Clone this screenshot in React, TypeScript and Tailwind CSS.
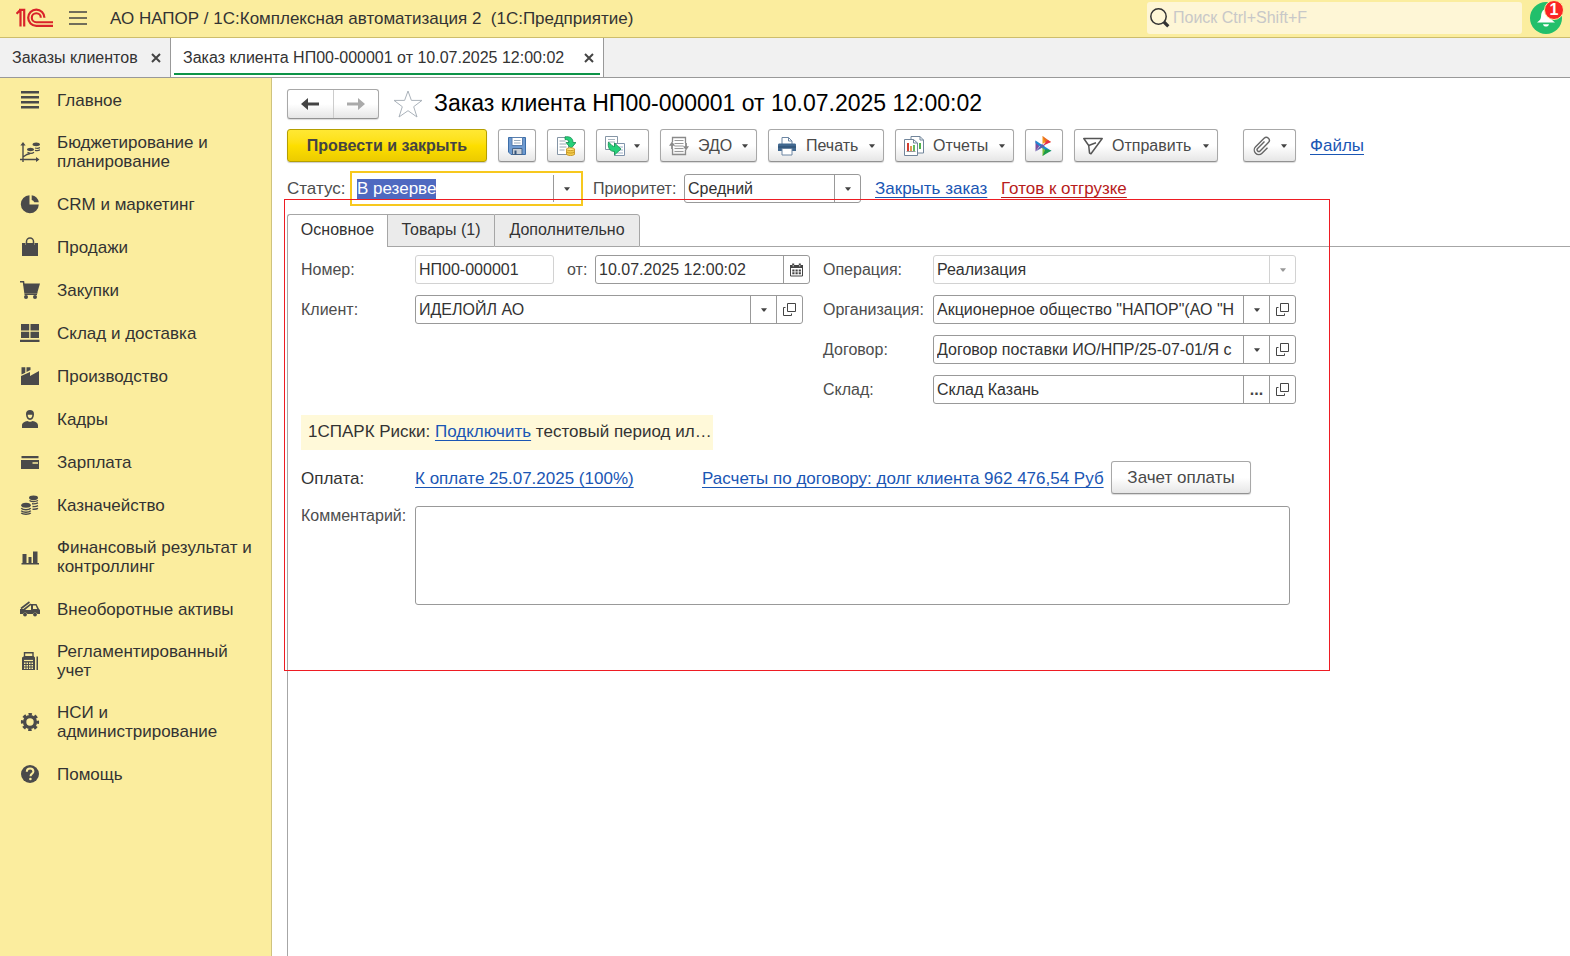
import { useEffect, useRef, type ReactNode } from "react";

type IconProps = { children: ReactNode; box?: string; className?: string };

function Icon({ children, box = "0 0 20 20", className = "size-5" }: IconProps) {
  return (
    <svg viewBox={box} className={`shrink-0 ${className}`} fill="none" aria-hidden="true">
      {children}
    </svg>
  );
}

const INK = "#4a4a4a";

const Caret = ({ className = "text-[#444]" }: { className?: string }) => (
  <svg viewBox="0 0 6 4" className={`h-1 w-1.5 shrink-0 ${className}`} aria-hidden="true">
    <path d="M0 .3h6L3.600 3.500H2.400z" fill="currentColor" />
  </svg>
);

const OpenIcon = () => (
  <Icon box="0 0 13 13" className="size-[13px]">
    <path d="M4.5.5h8v8h-8zM2.5 4.5h-2v8h8v-2" stroke="#444" />
  </Icon>
);

const CalendarIcon = () => (
  <Icon box="0 0 13 14" className="h-3.5 w-[13px]">
    <path d="M.5 3h12v10H.5z" stroke="#444" />
    <path d="M0 2h13v3H0zM2.200.5h2v2h-2zM8.800.5h2v2h-2z" fill="#444" />
    <path d="M3.200 2v1.500M9.800 2v1.500" stroke="#fff" strokeWidth=".8" />
    <path d="M2.300 7.500h8.600M2.300 10.300h8.600" stroke="#444" strokeWidth="2" strokeDasharray="2.200 1" />
  </Icon>
);

const CloseIcon = () => (
  <Icon box="0 0 10 10" className="size-[10px]">
    <path d="M1 1l8 8M9 1L1 9" stroke="#444" strokeWidth="2" />
  </Icon>
);

const sections: { label: string; icon: ReactNode }[] = [
  { label: "Главное", icon: <path d="M1 2.2h18M1 7.2h18M1 12.2h18M1 17.2h18" stroke={INK} strokeWidth="2.4" /> },
  {
    label: "Бюджетирование и планирование",
    icon: (
      <>
        <path d="M3 2v15.5h15M0 17.5h3M3 20v-3M3 15l4-2.5 3-1" stroke={INK} strokeWidth="1.4" />
        <path d="M3 0l2.6 3.6H.4zM19.5 17.5L16 15v5z" fill={INK} />
        <path d="M7 7.5c0-1 1.6-1.700 3.500-1.700s3.500.7 3.500 1.700-1.600 1.700-3.500 1.700S7 8.500 7 7.500zM12.500 2.500C12.500 1.300 14 .5 16.200.5S20 1.300 20 2.500 18.400 4.200 16.200 4.200s-3.700-.7-3.700-1.700z" fill={INK} />
        <path d="M7.500 10.300c2 1.200 5 1.200 6.500 0M15 6c2 .6 4 .3 5-.6M15 8.300c2 .5 4 .2 5-.6" stroke={INK} strokeWidth="1.200" />
      </>
    ),
  },
  {
    label: "CRM и маркетинг",
    icon: (
      <path d="M9.500 1.200v9.200h9.300A9 9 0 1 1 9.500 1.200zM11.700 1.200A8.800 8.800 0 0 1 18.800 8.200h-4.500a3.800 3.800 0 0 0-2.600-2.300z" fill={INK} />
    ),
  },
  {
    label: "Продажи",
    icon: (
      <>
        <path d="M2 6h3.500v2h1.500V6h6v2h1.500V6H18v13H2z" fill={INK} />
        <path d="M6.500 8V4.500a3.500 3.500 0 0 1 7 0V8" stroke={INK} strokeWidth="1.500" />
      </>
    ),
  },
  {
    label: "Закупки",
    icon: (
      <>
        <path d="M0 1.800h3.500l1.500 11h12.500" stroke={INK} strokeWidth="1.500" />
        <path d="M3.500 3.500H20L17.500 12H5zM4.500 13.500H17V15H4.500z" fill={INK} />
        <circle cx="6" cy="17" r="2" fill={INK} />
        <circle cx="15" cy="17" r="2" fill={INK} />
      </>
    ),
  },
  {
    label: "Склад и доставка",
    icon: <path d="M1 1h8.200v6.500H1zM10.500 1H19v6.500h-8.500zM1 8.700h8.200V15H1zM10.500 8.700H19V15h-8.500zM0 16.700h19.500V19H0z" fill={INK} />,
  },
  {
    label: "Производство",
    icon: <path d="M1 19V10l9-4v4l9-5v14zM1.500 1.200h3.800v5.500L1.500 8.500zM6.500 1.200h4V4L6.500 6z" fill={INK} />,
  },
  {
    label: "Кадры",
    icon: (
      <>
        <path d="M6 5c0-2.500 1.500-4 4-4s4 1.500 4 4c0 3-1.500 6-4 6S6 8 6 5z" fill={INK} />
        <path d="M7.700 5.800h4.600c0 2-.8 3.500-2.300 3.500S7.700 7.800 7.700 5.800z" fill="#fbed9e" />
        <path d="M2 19v-2.500C2 14 4.500 12.300 7.500 12c1 1 4 1 5 0 3 .3 5.500 2 5.500 4.500V19z" fill={INK} />
      </>
    ),
  },
  {
    label: "Зарплата",
    icon: (
      <>
        <path d="M1.500 4h17v2.200H1.500zM1 8h18v9H1z" fill={INK} />
        <path d="M12.500 11h5.500" stroke="#fbed9e" strokeWidth="1.500" />
      </>
    ),
  },
  {
    label: "Казначейство",
    icon: (
      <>
        <ellipse cx="13.500" cy="2.800" rx="4.500" ry="2.300" fill={INK} />
        <ellipse cx="6" cy="10.300" rx="4.800" ry="2.500" fill={INK} />
        <path d="M9.500 5.500c2 1.400 6 1.400 8.500 0M12 8.800c2 .3 4 0 6-.9M12.500 11.500c2 .3 4 0 5.500-.8M12.500 14.200c2 .2 4 0 5.500-.8M1.200 13.200c2 2 7.500 2 9.600 0M1.200 15.700c2 2 7.500 2 9.600 0M1.200 18c2 1.700 7.500 1.700 9.600 0" stroke={INK} strokeWidth="1.400" />
      </>
    ),
  },
  {
    label: "Финансовый результат и контроллинг",
    icon: <path d="M2.500 7H6.500v9H2.500zM8.500 10h3v6h-3zM13 4.500h4.500V16H13zM1.500 16h17.500v1.500H1.500z" fill={INK} />,
  },
  {
    label: "Внеоборотные активы",
    icon: (
      <>
        <path d="M1 9.500L9.500 3M3.500 11L11 5.200" stroke={INK} strokeWidth="1.600" />
        <path d="M0 10h4l2 1h5V5h5.500L19 10l1 1v4h-2.500a2.600 2.600 0 0 0-4.800 0H7.500a2.600 2.600 0 0 0-4.800 0H0z" fill={INK} />
        <path d="M13 6.500h2.700l1.500 3.500H13z" fill="#fbed9e" />
        <circle cx="5" cy="15.500" r="1.900" fill={INK} />
        <circle cx="15" cy="15.500" r="1.900" fill={INK} />
      </>
    ),
  },
  {
    label: "Регламентированный учет",
    icon: (
      <>
        <path d="M4.500 6V1.700h8.500V6" stroke={INK} strokeWidth="1.400" />
        <path d="M2 6.500L4.500 5h9L15 6.500V19H2zM16.500 5.500H18V19h-1.500z" fill={INK} />
        <path d="M4 9.500h9" stroke="#fbed9e" strokeWidth="1.200" />
        <path d="M4 12.200h9M4 14.700h9M4 17.200h9" stroke="#fbed9e" strokeWidth="1.400" strokeDasharray="1.500 1" />
      </>
    ),
  },
  {
    label: "НСИ и администрирование",
    icon: (
      <>
        <circle cx="10" cy="10" r="5.400" stroke={INK} strokeWidth="3.400" />
        <circle cx="10" cy="10" r="7.800" stroke={INK} strokeWidth="2.600" strokeDasharray="3.400 2.726" strokeDashoffset="1.700" />
      </>
    ),
  },
  {
    label: "Помощь",
    icon: (
      <>
        <circle cx="10" cy="10" r="9" fill={INK} />
        <path d="M6.800 7.800c0-2 1.300-3.200 3.300-3.200s3.300 1.100 3.300 2.800c0 2.200-2.900 2.300-2.900 4.800" stroke="#fbed9e" strokeWidth="2" />
        <circle cx="10.400" cy="15" r="1.300" fill="#fbed9e" />
      </>
    ),
  },
];

const btn =
  "flex h-[33px] shrink-0 items-center rounded-[3px] border border-[#a8a8a8] border-b-[#929292] bg-linear-to-b from-white from-50% to-[#e6e6e6] text-[#4a4a4a] shadow-[0_1px_1px_rgba(0,0,0,0.15)]";
const underlined = "text-[17px] underline underline-offset-[3px] [text-decoration-skip-ink:none]";
const link = `${underlined} text-[#1a56b4]`;
const field = "flex h-[29px] overflow-hidden rounded-[3px] border border-[#999] bg-white";
const fieldInput = "min-w-0 flex-1 bg-transparent px-[3px] text-[#333] outline-none";
const sideBtn = "flex w-[26px] shrink-0 items-center justify-center border-l border-[#999]";

function RefField({ id, value, label, dots, className = "" }: { id: string; value: string; label: string; dots?: boolean; className?: string }) {
  return (
    <div className={`${field} ${className}`}>
      <input id={id} type="text" defaultValue={value} className={fieldInput} />
      <button type="button" className={sideBtn} aria-label={`Выбрать: ${label}`}>
        {dots ? <span className="font-bold leading-4 text-[#444]">...</span> : <Caret />}
      </button>
      <button type="button" className={sideBtn} aria-label={`Открыть: ${label}`}>
        <OpenIcon />
      </button>
    </div>
  );
}

function TopBar() {
  return (
    <header className="flex h-[38px] shrink-0 items-center border-b border-[#cdbd6c] bg-[#fbed9e] pb-px pl-4 pr-2">
      <Icon box="0 0 38 20" className="h-5 w-[38px]">
        <path d="M.5 5.800L3.200 3.200h1.300V18.500M3 1.800h5.200v16.700" stroke="#d9232a" strokeWidth="2.200" />
        <path d="M28.400 9.700a8.100 8.100 0 1 0-8.100 8.100H37" stroke="#d9232a" strokeWidth="2.200" />
        <path d="M24.800 9.700a4.500 4.500 0 1 0-4.500 4.500H37" stroke="#d9232a" strokeWidth="2.100" />
      </Icon>
      <button type="button" className="ml-[15px]" aria-label="Меню">
        <Icon box="0 0 18 14" className="h-3.5 w-[18px]">
          <path d="M0 1h18M0 7h18M0 13h18" stroke="#444" strokeWidth="1.400" />
        </Icon>
      </button>
      <p className="ml-[23px] whitespace-pre pt-px text-[17px] text-[#333]">АО НАПОР / 1С:Комплексная автоматизация 2  (1С:Предприятие)</p>
      <label className="ml-auto flex h-8 w-[375px] items-center rounded-[3px] bg-[#fef6d6] pl-[3px]">
        <Icon>
          <circle cx="8.500" cy="8.500" r="7.700" stroke="#333" strokeWidth="1.500" />
          <path d="M14 14l4.300 4.300" stroke="#333" strokeWidth="3.200" />
        </Icon>
        <input type="search" aria-label="Поиск" placeholder="Поиск Ctrl+Shift+F" className="ml-[3px] min-w-0 flex-1 bg-transparent outline-none placeholder:text-[#c8c8c8]" />
      </label>
      <button type="button" className="relative ml-2 flex size-8 items-center justify-center rounded-full bg-[#22bf6b]" aria-label="Уведомления">
        <Icon box="0 0 20 20">
          <path d="M10 1c-3.500.6-4.700 3.500-4.900 7-.1 3-1.300 4.500-4.100 6.500h18c-2.800-2-4-3.500-4.100-6.500-.2-3.500-1.400-6.400-4.900-7zM7 16.200h6c-.3 1.500-1.500 2.300-3 2.300s-2.700-.8-3-2.300z" fill="#fff" />
        </Icon>
        <span className="absolute -right-[2px] -top-[2px] flex size-5 items-center justify-center rounded-full border border-[#fbed9e] bg-[#fb2525] text-base leading-4 font-bold text-white">1</span>
      </button>
    </header>
  );
}

function WindowTabs() {
  return (
    <nav className="flex h-10 shrink-0 border-b border-[#999] bg-[#f1f1f1] text-[#333]">
      <div className="flex w-[171px] items-center justify-between border-r border-[#999] pl-3 pr-[9px]">
        <a href="#orders">Заказы клиентов</a>
        <button type="button" aria-label="Закрыть вкладку"><CloseIcon /></button>
      </div>
      <div className="flex w-[433px] border-r border-[#999] bg-white px-[3px] pb-[2px]">
        <div className="flex flex-1 items-center justify-between border-b-2 border-[#0d9448] pl-[9px] pr-[6px] pt-1">
          <a href="#order">Заказ клиента НП00-000001 от 10.07.2025 12:00:02</a>
          <button type="button" aria-label="Закрыть вкладку"><CloseIcon /></button>
        </div>
      </div>
    </nav>
  );
}

function Sidebar() {
  return (
    <aside className="w-[272px] shrink-0 border-r border-[#cfc37f] bg-[#fbed9e]">
      {sections.map((s) => (
        <a key={s.label} href="#section" className="flex min-h-[43px] items-center gap-[17px] pl-5 pr-3 pt-3 pb-[11px] text-[17px] leading-[19px] text-[#333]">
          <Icon>{s.icon}</Icon>
          <span>{s.label}</span>
        </a>
      ))}
    </aside>
  );
}

function Toolbar() {
  return (
    <div className="mt-[10px] flex items-center gap-[11px]">
      <button type="button" className="h-[33px] w-[200px] shrink-0 rounded-[3px] border border-[#b59f00] bg-linear-to-b from-[#ffe833] via-[#fddf00] to-[#eccb00] font-bold text-[#444] shadow-[0_1px_1px_rgba(0,0,0,0.2)]">
        Провести и закрыть
      </button>
      <button type="button" className={`${btn} w-[38px] justify-center`} aria-label="Записать">
        <Icon>
          <path d="M1.500 1.500h17v17H4l-2.500-2.500z" fill="#6f9bd1" stroke="#3d6ea8" />
          <path d="M5 1.500h10.500v8H5z" fill="#fff" stroke="#5a7fae" />
          <path d="M7 4.500h6.500M7 7h6.500" stroke="#9ab" />
          <path d="M5.500 12.500h9.500v6H5.500z" fill="#c9cfd6" stroke="#45648a" />
          <path d="M7.500 14.500h2v4h-2z" fill="#34547c" />
        </Icon>
      </button>
      <button type="button" className={`${btn} w-[38px] justify-center`} aria-label="Провести">
        <Icon>
          <path d="M1.500 1.500h11v17h-11z" fill="#fff" stroke="#8595a5" />
          <path d="M3.500 5h6M3.500 8h7M3.500 11h7M3.500 14h5" stroke="#9aa8b5" />
          <path d="M9 .8c5-.6 8 1.200 8 5.700h3l-5 6-5-6h3c0-2-1.200-3-4-3z" fill="#25d07a" stroke="#158f50" strokeWidth=".8" />
          <path d="M10.500 13v5.500c2 1.500 6 1.500 8 0V13z" fill="#f3cc4e" stroke="#c18d17" strokeWidth=".8" />
          <ellipse cx="14.500" cy="13.200" rx="4" ry="1.400" fill="#ffe888" stroke="#c18d17" strokeWidth=".8" />
          <path d="M10.500 16c2 1.400 6 1.400 8 0" stroke="#c18d17" strokeWidth=".8" />
        </Icon>
      </button>
      <button type="button" className={`${btn} w-[53px] justify-between pl-2 pr-2`} aria-label="Создать на основании">
        <Icon>
          <path d="M.5.500h12v13H.5z" fill="#fff" stroke="#8595a5" />
          <path d="M3 3.500h7M3 6h7M3 8.500h3" stroke="#a9b5c0" />
          <path d="M9.500 7.500h10v12h-10z" fill="#fff" stroke="#7f93ab" />
          <path d="M14 11h4M14 14h4M12 17h6" stroke="#9fb2c8" />
          <path d="M3.500 6l3.500 3.500c.8.7 1.500 1 2.500 1V7l6.500 6-6.500 6v-3.500c-5 0-7-4-6-9.500z" fill="#25d07a" stroke="#158f50" strokeWidth=".8" />
        </Icon>
        <Caret />
      </button>
      <button type="button" className={`${btn} w-[97px] pl-2 pr-2`}>
        <Icon>
          <path d="M3.500 6V1.500h13V7M3.500 13v5.500h13V14" stroke="#8a8a8a" strokeWidth="1.300" />
          <path d="M5.500 4.500h9M5.500 7.500h9M5.500 10h9M5.500 12.500h9M5.500 15.500h9" stroke="#999" strokeWidth="1.200" />
          <path d="M3 5.500l3.200 4.200H0zM17 14.500l3-4.200h-6z" fill="#8a8a8a" />
          <path d="M3 9v4M17 7v4" stroke="#8a8a8a" strokeWidth="1.800" />
        </Icon>
        <span className="ml-[9px] mr-auto">ЭДО</span>
        <Caret />
      </button>
      <button type="button" className={`${btn} w-[116px] pl-2 pr-2`}>
        <Icon>
          <path d="M5 9V1.500h6.500L15 5v4z" fill="#fff" stroke="#6c86a3" />
          <path d="M11.500 1.500V5H15" stroke="#6c86a3" />
          <path d="M2.500 7.500h15c1 0 1.500.5 1.500 1.500v6H1V9c0-1 .5-1.500 1.500-1.500z" fill="#41688f" />
          <path d="M1 11h18" stroke="#2b4b6d" />
          <path d="M5 12.500h10v6.500H5z" fill="#fff" stroke="#6c86a3" />
        </Icon>
        <span className="ml-[9px] mr-auto">Печать</span>
        <Caret />
      </button>
      <button type="button" className={`${btn} w-[119px] pl-2 pr-2`}>
        <Icon>
          <path d="M7 .500h9L19.500 4v13H7z" fill="#fff" stroke="#71859a" />
          <path d="M16 .500V4h3.500" stroke="#71859a" />
          <path d="M16 7v6" stroke="#52b54f" strokeWidth="2" />
          <path d="M.5 3.500h9L13.500 7v12.500H.5z" fill="#fff" stroke="#71859a" />
          <path d="M9.500 3.500V7h4" stroke="#71859a" />
          <path d="M4 7v8" stroke="#d33c2f" strokeWidth="2" />
          <path d="M7 10v5" stroke="#e0853a" strokeWidth="1.700" />
          <path d="M10 9v6" stroke="#52b54f" strokeWidth="1.800" />
          <path d="M2.500 15.500h9" stroke="#999" />
        </Icon>
        <span className="ml-[9px] mr-auto">Отчеты</span>
        <Caret />
      </button>
      <button type="button" className={`${btn} w-[38px] justify-center`} aria-label="1С:Шина">
        <Icon>
          <path d="M8.500 0v8l5-3z" fill="#f39a1e" />
          <path d="M8.500 0l8.500 6-5 1.500z" fill="#ea6a1f" />
          <path d="M8.500 10L17 6l-3.500-2z" fill="#e5304a" />
          <path d="M1.500 4.500v11l4-5.500z" fill="#7b4fa0" />
          <path d="M1.500 4.500L17.500 15l-4.500 1L1.500 7z" fill="#1e88d2" />
          <path d="M1.500 15.500L8 8l3 2z" fill="#5b62b0" />
          <path d="M8.500 11v9l4-3.500z" fill="#7bbf3a" />
          <path d="M8.500 20l9-5.500-6-1.500z" fill="#1c9c4b" />
        </Icon>
      </button>
      <button type="button" className={`${btn} w-[144px] pl-2 pr-2`}>
        <Icon>
          <path d="M.8 2.500h18.400L8 17.800l-1.500-.8-.8-7.500z" stroke="#555" strokeWidth="1.500" strokeLinejoin="round" />
          <path d="M5.700 9.500L13 6.800" stroke="#555" strokeWidth="1.500" />
        </Icon>
        <span className="ml-[9px] mr-auto">Отправить</span>
        <Caret />
      </button>
      <button type="button" className={`${btn} ml-[14px] w-[53px] justify-between pl-2 pr-2`} aria-label="Присоединенные файлы">
        <Icon>
          <path d="M12.500 5.500L5.600 12.400a1.700 1.700 0 0 0 2.500 2.500l8.300-8.300a3 3 0 0 0-4.300-4.300L3.600 10.800a4.500 4.500 0 0 0 6.400 6.400l5.500-5.500" stroke="#666" strokeWidth="1.400" />
        </Icon>
        <Caret />
      </button>
      <a href="#files" className={`${link} ml-[3px]`}>Файлы</a>
    </div>
  );
}

function StatusRow() {
  const ref = useRef<HTMLInputElement>(null);
  useEffect(() => {
    ref.current?.focus();
    ref.current?.select();
  }, []);
  return (
    <div className="mt-[9px] flex h-[35px] items-center text-[#4d4d4d]">
      <label htmlFor="status" className="w-[63px] text-[17px]">Статус:</label>
      <div className="flex h-[35px] w-[233px] border-2 border-[#f7c81e] bg-white p-[2px]">
        <input ref={ref} id="status" type="text" defaultValue="В резерве" className="min-w-0 flex-1 bg-transparent pl-[3px] text-[17px] text-[#333] outline-none selection:bg-[#4f69c0] selection:text-white" />
        <button type="button" className="flex w-[26px] items-center justify-center border-l border-[#999]" aria-label="Выбрать статус">
          <Caret />
        </button>
      </div>
      <label htmlFor="priority" className="ml-[10px] w-[91px]">Приоритет:</label>
      <div className={`${field} relative w-[177px]`}>
        <select id="priority" className={`${fieldInput} appearance-none`}>
          <option>Средний</option>
        </select>
        <span className="pointer-events-none absolute inset-y-0 right-0 flex w-[26px] items-center justify-center border-l border-[#999]"><Caret /></span>
      </div>
      <a href="#close" className={`${link} ml-[14px] w-[112px] whitespace-nowrap`}>Закрыть заказ</a>
      <a href="#ready" className={`${underlined} ml-[14px] text-[#b81c1c]`}>Готов к отгрузке</a>
    </div>
  );
}

function OrderForm() {
  return (
    <form className="flex-1 border-l border-[#a6a6a6] pl-[13px] pt-2 text-[#4d4d4d]">
      <div className="flex gap-[13px]">
        <div className="grid w-[509px] grid-cols-[114px_1fr] content-start items-center gap-y-[11px]">
          <label htmlFor="number">Номер:</label>
          <div className="flex items-center">
            <input id="number" type="text" readOnly value="НП00-000001" className="h-[29px] w-[139px] rounded-[3px] border border-[#d2d2d2] px-[3px] text-[#333]" />
            <label htmlFor="date" className="ml-[13px] w-7">от:</label>
            <div className={`${field} w-[215px]`}>
              <input id="date" type="text" defaultValue="10.07.2025 12:00:02" className={fieldInput} />
              <button type="button" className={sideBtn} aria-label="Календарь"><CalendarIcon /></button>
            </div>
          </div>
          <label htmlFor="client">Клиент:</label>
          <RefField id="client" value="ИДЕЛОЙЛ АО" label="Клиент" className="w-[388px]" />
        </div>
        <div className="grid w-[473px] grid-cols-[110px_1fr] items-center gap-y-[11px]">
          <label htmlFor="operation">Операция:</label>
          <div className="relative flex h-[29px] rounded-[3px] border border-[#d2d2d2] bg-white">
            <select id="operation" disabled className={`${fieldInput} appearance-none opacity-100`}>
              <option>Реализация</option>
            </select>
            <span className="pointer-events-none absolute inset-y-0 right-0 flex w-[26px] items-center justify-center border-l border-[#d2d2d2]"><Caret className="text-[#999]" /></span>
          </div>
          <label htmlFor="org">Организация:</label>
          <RefField id="org" value={'Акционерное общество "НАПОР"(АО "Н'} label="Организация" />
          <label htmlFor="contract">Договор:</label>
          <RefField id="contract" value="Договор поставки ИО/НПР/25-07-01/Я с" label="Договор" />
          <label htmlFor="store">Склад:</label>
          <RefField id="store" value="Склад Казань" label="Склад" dots />
        </div>
      </div>
      <p className="mt-[11px] h-[35px] w-[412px] overflow-hidden whitespace-nowrap bg-[#fff9d9] px-[7px] text-[17px] leading-[34px] text-[#333]">
        1СПАРК Риски: <a href="#spark" className={link}>Подключить</a> тестовый период ил…
      </p>
      <div className="mt-[11px] flex items-center">
        <span className="w-[114px] pt-[2px] text-[17px] text-[#333]">Оплата:</span>
        <a href="#payment" className={`${link} w-[287px] pt-[2px]`}>К оплате 25.07.2025 (100%)</a>
        <a href="#debt" className={`${link} w-[395px] whitespace-nowrap pt-[2px]`}>Расчеты по договору: долг клиента 962 476,54 Руб</a>
        <button type="button" className={`${btn} ml-[14px] w-[140px] justify-center text-[17px]`}>Зачет оплаты</button>
      </div>
      <div className="mt-3 flex items-start">
        <label htmlFor="comment" className="w-[114px] leading-5">Комментарий:</label>
        <textarea id="comment" className="block h-[99px] w-[875px] resize-none rounded-[3px] border border-[#999] bg-white p-1 outline-none" />
      </div>
    </form>
  );
}

export default function App() {
  return (
    <div className="flex min-h-screen flex-col bg-white font-['Liberation_Sans',Arial,sans-serif] text-base leading-5">
      <TopBar />
      <WindowTabs />
      <div className="flex flex-1">
        <Sidebar />
        <main className="relative flex min-w-0 flex-1 flex-col pl-[15px] pt-[10px]">
          <div className="flex h-[31px] items-center">
            <div className={`${btn} h-[30px]! w-[92px]`}>
              <button type="button" className="flex h-full flex-1 items-center justify-center border-r border-[#ccc]" aria-label="Назад">
                <Icon box="0 0 18 12" className="h-3 w-[18px]">
                  <path d="M7 0L0 6l7 6V7.500h11v-3H7z" fill="#444" />
                </Icon>
              </button>
              <button type="button" className="flex h-full flex-1 items-center justify-center" aria-label="Вперед">
                <Icon box="0 0 18 12" className="h-3 w-[18px]">
                  <path d="M11 0l7 6-7 6V7.500H0v-3h11z" fill="#aaa" />
                </Icon>
              </button>
            </div>
            <button type="button" className="ml-[14px]" aria-label="В избранное">
              <Icon box="0 0 30 28" className="h-7 w-[30px]">
                <path d="M15 1l3.400 9.400h10.600l-8.300 6.300 3.300 10.300-9-6.300-9 6.300 3.300-10.300L1 10.400h10.600z" stroke="#aab2ba" />
              </Icon>
            </button>
            <h1 className="ml-[11px] pb-[2px] text-[23px] leading-7 text-black">Заказ клиента НП00-000001 от 10.07.2025 12:00:02</h1>
          </div>
          <Toolbar />
          <StatusRow />
          <div role="tablist" className="mt-2 flex h-[33px] text-[#333]">
            <button type="button" role="tab" aria-selected="true" className="w-[100px] rounded-tl-[3px] border-l border-t border-[#a6a6a6] bg-white pb-[2px]">Основное</button>
            <button type="button" role="tab" aria-selected="false" className="w-[107px] border border-r-0 border-[#a6a6a6] bg-[#ebebeb] pb-px">Товары (1)</button>
            <button type="button" role="tab" aria-selected="false" className="w-[146px] rounded-tr-[3px] border border-[#a6a6a6] bg-[#ebebeb] pb-px">Дополнительно</button>
            <div className="flex-1 border-b border-[#a6a6a6]" />
          </div>
          <OrderForm />
          <div className="pointer-events-none absolute left-3 top-[121px] h-[472px] w-[1046px] border border-[#ee1c23]" />
        </main>
      </div>
    </div>
  );
}
